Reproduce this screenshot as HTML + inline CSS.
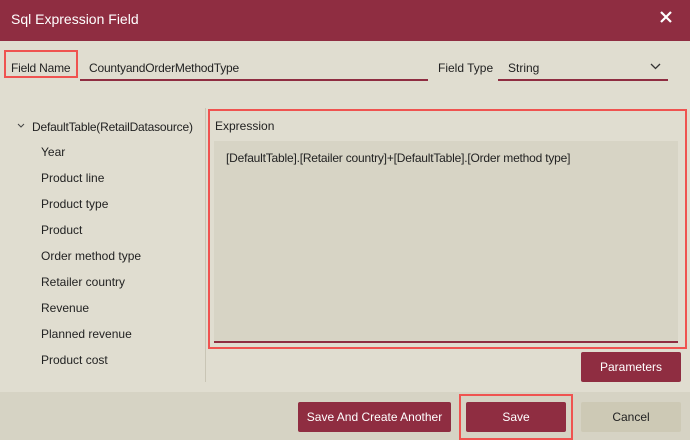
<!DOCTYPE html>
<html><head><style>
*{margin:0;padding:0;box-sizing:border-box}
body{width:690px;height:440px;background:#e0ddd0;font-family:"Liberation Sans",sans-serif;font-size:12px;color:#222;position:relative;overflow:hidden}
.a{position:absolute}
.hdr{left:0;top:0;width:690px;height:41px;background:#8f2d41;color:#fff;font-size:14px;padding:11px 0 0 11px}
.red{border:2px solid #ef5350}
.btn{background:#8f2d41;color:#fff;border-radius:2px;text-align:center;font-size:12px}
</style></head><body>
<div class="a hdr">Sql Expression Field</div>
<svg class="a" style="left:659px;top:10px" width="14" height="14"><path d="M2 2L12 12M12 2L2 12" stroke="#fff" stroke-width="2.2"/></svg>
<div class="a red" style="left:4px;top:50px;width:74px;height:28px"></div>
<div class="a" style="left:11px;top:61px;letter-spacing:-0.2px">Field Name</div>
<div class="a" style="left:89px;top:61px;letter-spacing:-0.2px">CountyandOrderMethodType</div>
<div class="a" style="left:80px;top:79px;width:348px;height:2px;background:#8f2d41"></div>
<div class="a" style="left:438px;top:61px">Field Type</div>
<div class="a" style="left:508px;top:61px">String</div>
<svg class="a" style="left:650px;top:63px" width="12" height="8"><path d="M1 1L5.5 5.5L10 1" stroke="#333" stroke-width="1.3" fill="none"/></svg>
<div class="a" style="left:498px;top:79px;width:170px;height:2px;background:#8f2d41"></div>
<svg class="a" style="left:17px;top:123px" width="8" height="6"><path d="M1 1L4 4L7 1" stroke="#444" stroke-width="1" fill="none"/></svg>
<div class="a" style="left:32px;top:120px;letter-spacing:-0.2px">DefaultTable(RetailDatasource)</div>
<div class="a" style="left:41px;top:139px;line-height:26px">Year<br>Product line<br>Product type<br>Product<br>Order method type<br>Retailer country<br>Revenue<br>Planned revenue<br>Product cost</div>
<div class="a" style="left:205px;top:108px;width:1px;height:274px;background:#c9c5b5"></div>
<div class="a red" style="left:208px;top:109px;width:479px;height:240px"></div>
<div class="a" style="left:215px;top:119px">Expression</div>
<div class="a" style="left:214px;top:141px;width:464px;height:202px;background:#d7d4c5;border-bottom:2px solid #8f2d41"></div>
<div class="a" style="left:226px;top:151px;letter-spacing:-0.2px">[DefaultTable].[Retailer country]+[DefaultTable].[Order method type]</div>
<div class="a btn" style="left:581px;top:352px;width:100px;height:30px;line-height:30px">Parameters</div>
<div class="a" style="left:0;top:392px;width:690px;height:48px;background:#d6d3c4"></div>
<div class="a btn" style="left:298px;top:402px;width:153px;height:30px;line-height:30px">Save And Create Another</div>
<div class="a red" style="left:459px;top:394px;width:114px;height:46px"></div>
<div class="a btn" style="left:466px;top:402px;width:100px;height:30px;line-height:30px">Save</div>
<div class="a" style="left:581px;top:402px;width:100px;height:30px;line-height:30px;background:#cdc9b5;text-align:center;border-radius:2px">Cancel</div>
</body></html>
